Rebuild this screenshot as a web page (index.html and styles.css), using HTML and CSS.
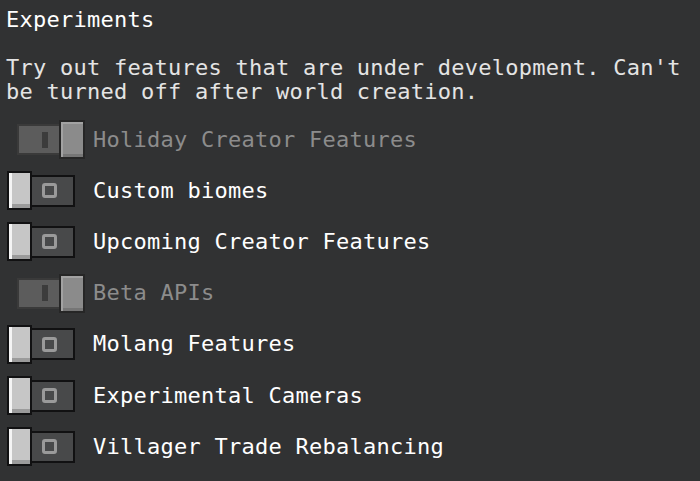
FILE: index.html
```html
<!DOCTYPE html>
<html lang="en">
<head>
<meta charset="UTF-8">
<meta name="viewport" content="width=device-width, initial-scale=1.0">
<title>Experiments</title>
<link rel="stylesheet" href="styles.css">
</head>
<body>
<div class="panel">
  <h2 class="title">Experiments</h2>
  <p class="desc">Try out features that are under development. Can't be turned off after world creation.</p>

  <ul class="toggles">
    <li class="row locked">
      <div class="switch on"><span class="track"><i class="mark-on"></i></span><span class="knob"></span></div>
      <span class="label">Holiday Creator Features</span>
    </li>
    <li class="row">
      <div class="switch"><span class="knob"></span><span class="track"><i class="mark-off"></i></span></div>
      <span class="label">Custom biomes</span>
    </li>
    <li class="row">
      <div class="switch"><span class="knob"></span><span class="track"><i class="mark-off"></i></span></div>
      <span class="label">Upcoming Creator Features</span>
    </li>
    <li class="row locked">
      <div class="switch on"><span class="track"><i class="mark-on"></i></span><span class="knob"></span></div>
      <span class="label">Beta APIs</span>
    </li>
    <li class="row">
      <div class="switch"><span class="knob"></span><span class="track"><i class="mark-off"></i></span></div>
      <span class="label">Molang Features</span>
    </li>
    <li class="row">
      <div class="switch"><span class="knob"></span><span class="track"><i class="mark-off"></i></span></div>
      <span class="label">Experimental Cameras</span>
    </li>
    <li class="row">
      <div class="switch"><span class="knob"></span><span class="track"><i class="mark-off"></i></span></div>
      <span class="label">Villager Trade Rebalancing</span>
    </li>
  </ul>
</div>
</body>
</html>
```

FILE: styles.css
```css
/* Experiments settings panel */
body {
  margin: 0;
  background: #313233;
  font-family: "DejaVu Sans Mono", monospace;
  font-size: 22px;
  letter-spacing: 0.25px;
  color: #fff;
}

.panel {
  padding: 8px 0 0 6px;
}

.title {
  margin: 0;
  font-size: 22px;
  font-weight: normal;
  line-height: 24px;
}

.desc {
  margin: 24px 0 0;
  width: 690px;
  line-height: 24px;
  color: #e4e4e4;
}

.toggles {
  list-style: none;
  margin: 10px 0 0 -6px;
  padding: 0;
}

.row {
  display: flex;
  align-items: center;
  height: 51.2px;
}

.label {
  line-height: 24px;
}

.locked .label {
  color: #8c8c8c;
}

/* switch: knob + track */
.switch {
  display: flex;
  align-items: center;
  flex: none;
  width: 93px;
  padding-left: 7px;
  box-sizing: border-box;
}

.locked .switch {
  padding-left: 17px;
}

.knob {
  width: 25px;
  height: 39px;
  box-sizing: border-box;
  border: 2px solid #111112;
  background: #c6c6c6;
  box-shadow: inset 3px 0 #f4f4f4, inset 0 -4px #9b9b9b;
}

.track {
  display: flex;
  align-items: center;
  width: 43px;
  height: 32px;
  box-sizing: border-box;
  border: 2px solid #111112;
  border-left: none;
  background: #48494a;
}

.mark-off {
  width: 15px;
  height: 15px;
  box-sizing: border-box;
  margin-left: 10px;
  border: 3px solid #9a9a9a;
  border-radius: 3px;
}

/* locked switches, turned on */
.on .track {
  width: 42px;
  height: 31px;
  border: 2px solid #3a3a3a;
  border-right: none;
  background: #5c5c5c;
}

.on .knob {
  width: 26px;
  border-color: #262626;
  background: #8b8b8b;
  box-shadow: inset 2px 2px #a2a2a2, inset 0 -3px #767676;
}

.mark-on {
  width: 6px;
  height: 16px;
  margin-left: 23px;
  background: #3c3c3c;
}
```
